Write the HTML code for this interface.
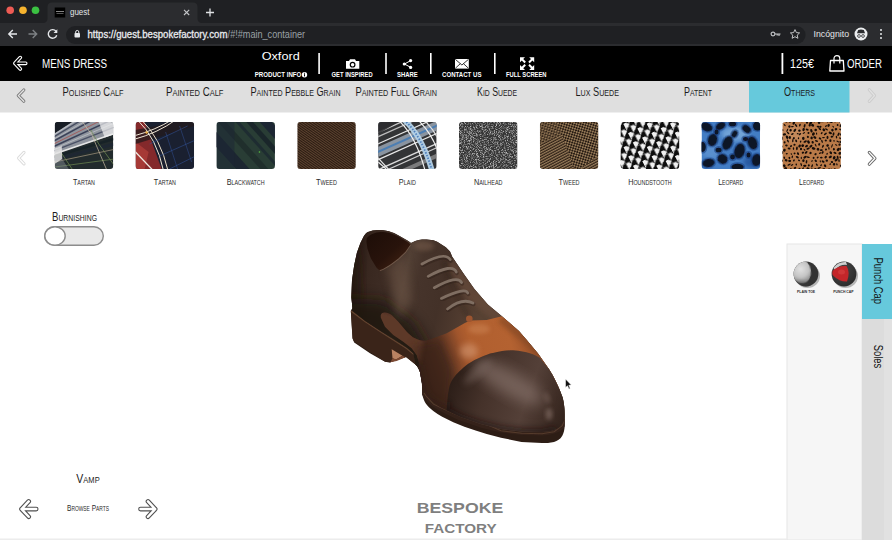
<!DOCTYPE html>
<html><head><meta charset="utf-8"><title>guest</title>
<style>
*{margin:0;padding:0}
html,body{width:892px;height:540px;overflow:hidden;background:#fff}
svg{display:block;font-family:"Liberation Sans", sans-serif}
text{white-space:pre}
</style></head><body>
<svg width="892" height="540" viewBox="0 0 892 540">
<!-- browser chrome -->
<rect x="0" y="0" width="892" height="23" fill="#1f2023"/>
<path d="M43 23 Q47 23 47.5 19 V7 Q47.5 2.5 52 2.5 H193 Q197.500 2.500 197.500 7 V19 Q198 23 202 23 Z" fill="#2b2c2f"/>
<rect x="0" y="23" width="892" height="23" fill="#2b2c2f"/>
<circle cx="10.2" cy="10.2" r="3.800" fill="#ee5b54"/>
<circle cx="23" cy="10.2" r="3.800" fill="#f6b32e"/>
<circle cx="35.5" cy="10.2" r="3.800" fill="#3bc142"/>
<rect x="54.700" y="7.500" width="10.500" height="10" fill="#000"/>
<rect x="56" y="11" width="8" height="0.6" fill="#ddd"/><rect x="56.500" y="13" width="7" height="0.500" fill="#aaa"/>
<text x="70" y="15.3" font-size="9.5" fill="#e4e6e9" font-weight="normal" text-anchor="start" textLength="19.5" lengthAdjust="spacingAndGlyphs" >guest</text>
<path d="M184 9.800 L189.200 15 M189.200 9.800 L184 15" stroke="#c4c6c9" stroke-width="1.100" fill="none"/>
<path d="M210 8.500 V16.500 M206 12.500 H214" stroke="#dfe1e4" stroke-width="1.300" fill="none"/>
<path d="M17 34 H9 M12.800 30 L8.800 34 L12.800 38" stroke="#e6e8eb" stroke-width="1.400" fill="none"/>
<path d="M28.500 34 H36.500 M32.700 30 L36.700 34 L32.700 38" stroke="#7d8084" stroke-width="1.400" fill="none"/>
<path d="M56 31.300 A4.300 4.300 0 1 0 56.700 35.200" stroke="#e6e8eb" stroke-width="1.400" fill="none"/><path d="M57.300 29.200 V33 H53.500 Z" fill="#e6e8eb"/>
<rect x="66" y="26" width="739.600" height="18" rx="9" fill="#1f2023"/>
<rect x="74.500" y="33" width="5.500" height="4.600" rx="0.800" fill="#e6e8eb"/><path d="M75.700 33 V32 A1.550 1.550 0 0 1 78.800 32 V33" stroke="#e6e8eb" stroke-width="1" fill="none"/>
<text x="87.400" y="37.500" font-size="10" fill="#e8eaed" textLength="140" lengthAdjust="spacingAndGlyphs" stroke="#e8eaed" stroke-width="0.300">https://guest.bespokefactory.com</text>
<text x="227.600" y="37.500" font-size="10" fill="#9aa0a6" textLength="77.500" lengthAdjust="spacingAndGlyphs">/#!#main_container</text>
<circle cx="773" cy="34" r="1.900" stroke="#bfc1c4" stroke-width="1.200" fill="none"/><path d="M775 34 H780.500 M779 34 V36 M777.200 34 V35.500" stroke="#bfc1c4" stroke-width="1.200" fill="none"/>
<path d="M795 29.600 L796.400 32.600 L799.600 32.900 L797.200 35.100 L797.900 38.300 L795 36.700 L792.100 38.300 L792.800 35.100 L790.400 32.900 L793.600 32.600 Z" stroke="#cfd1d4" stroke-width="0.900" fill="none" stroke-linejoin="round"/>
<text x="813.5" y="37.3" font-size="9.5" fill="#e4e6e9" font-weight="normal" text-anchor="start" textLength="35.5" lengthAdjust="spacingAndGlyphs" >Incógnito</text>
<circle cx="861" cy="34" r="6.500" fill="#eceef0"/>
<path d="M857 33.200 H865 L863.800 30 Q861 29.200 858.200 30 Z" fill="#2b2c2f"/><circle cx="859" cy="36" r="1.400" stroke="#2b2c2f" stroke-width="0.800" fill="none"/><circle cx="863" cy="36" r="1.400" stroke="#2b2c2f" stroke-width="0.800" fill="none"/>
<circle cx="881" cy="30" r="1" fill="#e6e8eb"/><circle cx="881" cy="34" r="1" fill="#e6e8eb"/><circle cx="881" cy="38" r="1" fill="#e6e8eb"/>
<!-- app header -->
<rect x="0" y="46" width="892" height="35" fill="#000"/>
<path d="M20.3 57.599999999999994 L14.9 63.3 L20.3 69.0 M14.9 63.3 L25.700000000000003 63.3" stroke="#fff" stroke-width="3.7" fill="none" stroke-linejoin="round" stroke-linecap="round"/><path d="M20.3 57.599999999999994 L14.9 63.3 L20.3 69.0 M14.9 63.3 L25.700000000000003 63.3" stroke="#000" stroke-width="1.5" fill="none" stroke-linejoin="round" stroke-linecap="round"/>
<text x="42" y="68.2" font-size="12.5" fill="#fff" font-weight="normal" text-anchor="start" textLength="65" lengthAdjust="spacingAndGlyphs" >MENS DRESS</text>
<text x="280.7" y="59.8" font-size="11" fill="#fff" font-weight="normal" text-anchor="middle" textLength="38" lengthAdjust="spacingAndGlyphs" >Oxford</text>
<text x="254.8" y="77.1" font-size="6.5" fill="#fff" font-weight="bold" text-anchor="start" textLength="46.5" lengthAdjust="spacingAndGlyphs" >PRODUCT INFO</text>
<circle cx="304.500" cy="74.700" r="2.700" fill="#fff"/><rect x="304" y="74.200" width="1" height="2.200" fill="#000"/><rect x="304" y="72.800" width="1" height="0.900" fill="#000"/>
<rect x="318.3" y="53" width="1.600" height="21" fill="#fff"/>
<rect x="385.2" y="53" width="1.600" height="21" fill="#fff"/>
<rect x="430" y="53" width="1.600" height="21" fill="#fff"/>
<rect x="494" y="53" width="1.600" height="21" fill="#fff"/>
<rect x="781.500" y="53" width="1.800" height="21" fill="#fff"/>
<path d="M346 61 H349 L350 59.300 H355 L356 61 H359.300 V68.700 H346 Z" fill="#fff"/><circle cx="352.600" cy="64.700" r="2.900" fill="#000"/><circle cx="352.600" cy="64.700" r="1.700" fill="#fff"/>
<text x="331.6" y="77.1" font-size="6.5" fill="#fff" font-weight="bold" text-anchor="start" textLength="41" lengthAdjust="spacingAndGlyphs" >GET INSPIRED</text>
<path d="M410.500 60.700 L404.500 64 L410.500 67.300" stroke="#fff" stroke-width="1" fill="none"/><circle cx="410.600" cy="60.600" r="1.600" fill="#fff"/><circle cx="404.300" cy="64" r="1.600" fill="#fff"/><circle cx="410.600" cy="67.400" r="1.600" fill="#fff"/>
<text x="397" y="77.1" font-size="6.5" fill="#fff" font-weight="bold" text-anchor="start" textLength="20.7" lengthAdjust="spacingAndGlyphs" >SHARE</text>
<rect x="455" y="59" width="13.800" height="9.600" fill="#fff"/><path d="M455.300 59.300 L461.900 65 L468.500 59.300 M455.300 68.300 L460.300 63.700 M468.500 68.300 L463.500 63.700" stroke="#000" stroke-width="0.800" fill="none"/>
<text x="442" y="77.1" font-size="6.5" fill="#fff" font-weight="bold" text-anchor="start" textLength="39.5" lengthAdjust="spacingAndGlyphs" >CONTACT US</text>
<path d="M520 57.3 h5 l-5 5 Z" fill="#fff"/><path d="M521.5 58.8 L525.2 62.5" stroke="#fff" stroke-width="2"/><path d="M534.2 57.3 h-5 l5 5 Z" fill="#fff"/><path d="M532.7 58.8 L529.0 62.5" stroke="#fff" stroke-width="2"/><path d="M520 70 h5 l-5 -5 Z" fill="#fff"/><path d="M521.5 68.5 L525.2 64.8" stroke="#fff" stroke-width="2"/><path d="M534.2 70 h-5 l5 -5 Z" fill="#fff"/><path d="M532.7 68.5 L529.0 64.8" stroke="#fff" stroke-width="2"/>
<text x="506" y="77.1" font-size="6.5" fill="#fff" font-weight="bold" text-anchor="start" textLength="40.5" lengthAdjust="spacingAndGlyphs" >FULL SCREEN</text>
<text x="790" y="68" font-size="12.5" fill="#fff" font-weight="normal" text-anchor="start" textLength="24" lengthAdjust="spacingAndGlyphs" >125€</text>
<path d="M830.500 60.500 H843.300 L844 71 H829.800 Z" stroke="#fff" stroke-width="1.300" fill="none" stroke-linejoin="round"/><path d="M834 63.500 V58.500 A2.900 2.900 0 0 1 839.800 58.500 V63.500" stroke="#fff" stroke-width="1.200" fill="none"/>
<text x="847" y="68" font-size="12.5" fill="#fff" font-weight="normal" text-anchor="start" textLength="35" lengthAdjust="spacingAndGlyphs" >ORDER</text>
<!-- category bar -->
<rect x="0" y="81" width="892" height="31.500" fill="#dfdfdf"/>
<rect x="749" y="81" width="100.500" height="31.500" fill="#66c9dc"/>
<text x="93" y="96.3" font-size="12" fill="#1c1c1c" font-weight="normal" text-anchor="middle" textLength="61" lengthAdjust="spacingAndGlyphs" >P<tspan font-size="9.3">OLISHED</tspan> C<tspan font-size="9.3">ALF</tspan></text>
<text x="194.7" y="96.3" font-size="12" fill="#1c1c1c" font-weight="normal" text-anchor="middle" textLength="57.5" lengthAdjust="spacingAndGlyphs" >P<tspan font-size="9.3">AINTED</tspan> C<tspan font-size="9.3">ALF</tspan></text>
<text x="295.5" y="96.3" font-size="12" fill="#1c1c1c" font-weight="normal" text-anchor="middle" textLength="90" lengthAdjust="spacingAndGlyphs" >P<tspan font-size="9.3">AINTED</tspan> P<tspan font-size="9.3">EBBLE</tspan> G<tspan font-size="9.3">RAIN</tspan></text>
<text x="396.2" y="96.3" font-size="12" fill="#1c1c1c" font-weight="normal" text-anchor="middle" textLength="81.5" lengthAdjust="spacingAndGlyphs" >P<tspan font-size="9.3">AINTED</tspan> F<tspan font-size="9.3">ULL</tspan> G<tspan font-size="9.3">RAIN</tspan></text>
<text x="497" y="96.3" font-size="12" fill="#1c1c1c" font-weight="normal" text-anchor="middle" textLength="40" lengthAdjust="spacingAndGlyphs" >K<tspan font-size="9.3">ID</tspan> S<tspan font-size="9.3">UEDE</tspan></text>
<text x="597.2" y="96.3" font-size="12" fill="#1c1c1c" font-weight="normal" text-anchor="middle" textLength="43.5" lengthAdjust="spacingAndGlyphs" >L<tspan font-size="9.3">UX</tspan> S<tspan font-size="9.3">UEDE</tspan></text>
<text x="698" y="96.3" font-size="12" fill="#1c1c1c" font-weight="normal" text-anchor="middle" textLength="28" lengthAdjust="spacingAndGlyphs" >P<tspan font-size="9.3">ATENT</tspan></text>
<text x="799.5" y="96.3" font-size="12" fill="#1c1c1c" font-weight="normal" text-anchor="middle" textLength="31" lengthAdjust="spacingAndGlyphs" >O<tspan font-size="9.3">THERS</tspan></text>
<path d="M23.8 90.0 L18.3 95.6 L23.8 101.19999999999999" stroke="#7d7d7d" stroke-width="3.2" fill="none" stroke-linejoin="round" stroke-linecap="round"/><path d="M23.8 90.0 L18.3 95.6 L23.8 101.19999999999999" stroke="#e4e4e4" stroke-width="1.3" fill="none" stroke-linejoin="round" stroke-linecap="round"/>
<path d="M869.3 89.8 L874.5 95.6 L869.3 101.39999999999999" stroke="#cdcdcd" stroke-width="3.2" fill="none" stroke-linejoin="round" stroke-linecap="round"/><path d="M869.3 89.8 L874.5 95.6 L869.3 101.39999999999999" stroke="#e2e2e2" stroke-width="1.3" fill="none" stroke-linejoin="round" stroke-linecap="round"/>
<!-- swatches -->
<defs><clipPath id="cSw"><rect x="0" y="0" width="58.500" height="47" rx="3.200"/></clipPath>
<pattern id="pTweed" width="2" height="2" patternUnits="userSpaceOnUse" patternTransform="rotate(35)"><rect width="2" height="2" fill="#24170f"/><rect width="2" height="0.900" fill="#70523a"/></pattern>
<pattern id="pHound" width="7.200" height="7.200" patternUnits="userSpaceOnUse" patternTransform="rotate(-27) scale(1.450) translate(1 2)"><rect width="7.200" height="7.200" fill="#0a0a0a"/><path d="M0 0 H3.600 V3.600 H0 Z M3.600 3.600 H7.200 V7.200 H3.600 Z" fill="#f0f0f0"/><path d="M0 3.600 H1.600 L0 5.200 Z M3.600 7.200 H5.200 L3.600 8.800 Z M3.600 0 H5.200 L3.600 1.600 Z" fill="#f0f0f0"/><path d="M3.600 0 V1.600 L2 0 Z M7.200 3.600 V5.200 L5.600 3.600 Z M0 3.600 V5.200 L-1.600 3.600 Z M3.600 3.600 L2 3.600 L3.600 2 Z M7.200 7.200 L5.600 7.200 L7.200 5.600 Z" fill="#0a0a0a"/></pattern>
<pattern id="pGlenA" width="2.400" height="2.400" patternUnits="userSpaceOnUse" patternTransform="rotate(-28)"><rect width="2.400" height="2.400" fill="#2a1d13"/><rect width="2.400" height="1.200" fill="#a08460"/></pattern>
<pattern id="pGlenB" width="3.600" height="3.600" patternUnits="userSpaceOnUse" patternTransform="rotate(-28)"><rect width="3.600" height="3.600" fill="#9c805c"/><rect width="1.800" height="1.800" fill="#21170f"/><rect x="1.800" y="1.800" width="1.800" height="1.800" fill="#21170f"/></pattern>
<filter id="fNoise" x="0" y="0" width="100%" height="100%"><feTurbulence type="fractalNoise" baseFrequency="0.900" numOctaves="2" seed="3" result="n"/><feColorMatrix in="n" type="matrix" values="0 0 0 0 0.280  0 0 0 0 0.280  0 0 0 0 0.280  2.600 0 0 0 -0.950"/><feComposite operator="in" in2="SourceGraphic"/></filter>
<filter id="fNoiseL" x="0" y="0" width="100%" height="100%"><feTurbulence type="fractalNoise" baseFrequency="1.300" numOctaves="1" seed="8" result="n"/><feColorMatrix in="n" type="matrix" values="0 0 0 0 0.660  0 0 0 0 0.660  0 0 0 0 0.660  3.200 0 0 0 -1.400"/><feComposite operator="in" in2="SourceGraphic"/></filter>
<filter id="b1" x="-20%" y="-20%" width="140%" height="140%"><feGaussianBlur stdDeviation="0.600"/></filter>
</defs>
<g transform="translate(54.75 122)" clip-path="url(#cSw)"><rect width="58.5" height="47" fill="#222b2d"/><path d="M0 11 L17 0 H58.500 V12.600 L0 32 Z" fill="#8f949d"/><path d="M-1 12.89 L59 -25.59" stroke="#b9bcc3" stroke-width="1.2" opacity="1" fill="none"/><path d="M-1 14.96 L59 -21.57" stroke="#454c60" stroke-width="1.4" opacity="1" fill="none"/><path d="M-1 17.23 L59 -17.15" stroke="#b4b8bf" stroke-width="1.0" opacity="1" fill="none"/><path d="M-1 19.09 L59 -13.53" stroke="#3a4158" stroke-width="1.5" opacity="1" fill="none"/><path d="M-1 21.99 L59 -7.90" stroke="#a8504e" stroke-width="0.8" opacity="1" fill="none"/><path d="M-1 24.47 L59 -3.08" stroke="#3a4158" stroke-width="1.5" opacity="1" fill="none"/><path d="M-1 26.75 L59 1.35" stroke="#b4b8bf" stroke-width="1.0" opacity="1" fill="none"/><path d="M-1 28.81 L59 5.37" stroke="#4a5166" stroke-width="1.4" opacity="1" fill="none"/><path d="M-1 32.12 L59 11.80" stroke="#e4e4e4" stroke-width="1.6" opacity="1" fill="none"/><path d="M-1 34.81 L59 17.02" stroke="#152026" stroke-width="2.5" opacity="0.8" fill="none"/><path d="M-1 40.19 L59 27.48" stroke="#a89a80" stroke-width="0.7" opacity="1" fill="none"/><path d="M-1 45.15 L59 37.12" stroke="#6f8a52" stroke-width="0.7" opacity="1" fill="none"/><path d="M-1 37.50 L59 22.25" stroke="#1a2438" stroke-width="3" opacity="0.5" fill="none"/><path d="M27 -1 L37 12.600 L52 48" stroke="#d0c0a8" stroke-width="0.800" fill="none" opacity="0.850"/><path d="M36 8 L44 22 L60 44" stroke="#6f8a52" stroke-width="0.800" fill="none" opacity="0.900"/><path d="M6 30 L18 48" stroke="#6f8a52" stroke-width="0.800" fill="none" opacity="0.900"/><path d="M44 0 H58.500 V12.600 L50 15.500 Z" fill="#f2f2f2" opacity="0.700"/><path d="M0 26.500 L7 24 L7.500 37 L0 42 Z" fill="#e4e4e4" opacity="0.850"/><path d="M0 0 H17 L0 11 Z" fill="#171c24"/><path d="M0 42 L7.500 37 L14 47 H0 Z" fill="#8a9098" opacity="0.450"/></g>
<g transform="translate(135.60 122)" clip-path="url(#cSw)"><rect width="58.5" height="47" fill="#1a2030"/><path d="M0 0 H9 L26 47 H0 Z" fill="#84292b"/><path d="M0 20 L13 30 L9 47 H0 Z" fill="#b5403c" opacity="0.700"/><path d="M0 8 L40 0 H58.500 V4 L0 22 Z" fill="#231a1c" opacity="0.750"/><path d="M-2 14 Q20 8 36 -2" stroke="#efe6d6" stroke-width="1" fill="none"/><path d="M-2 17.500 Q22 11 40 -2" stroke="#efe6d6" stroke-width="1" fill="none"/><path d="M2 -2 Q21 16 28 49" stroke="#efe6d6" stroke-width="1" fill="none"/><path d="M6 -2 Q25 16 32.500 49" stroke="#e9dcc6" stroke-width="1" fill="none"/><path d="M-2 28 L18 49" stroke="#f0e8e0" stroke-width="1.300" fill="none"/><circle cx="11" cy="10.500" r="1.200" fill="#f0b040"/><path d="M14 22 L52 4 M24 34 L60 18 M34 47 L60 34" stroke="#3456a0" stroke-width="0.700" fill="none" opacity="0.750"/><path d="M30 10 L42 47 M44 4 L56 40" stroke="#3456a0" stroke-width="0.700" fill="none" opacity="0.650"/></g>
<g transform="translate(216.45 122)" clip-path="url(#cSw)"><rect width="58.5" height="47" fill="#293d35"/><g transform="rotate(48 29 23)"><rect x="-30" y="-12" width="120" height="9" fill="#1b2433" opacity="0.9"/><rect x="-30" y="2" width="120" height="5" fill="#172128" opacity="0.8"/><rect x="-30" y="12" width="120" height="3" fill="#1a2530" opacity="0.7"/><rect x="-30" y="22" width="120" height="6" fill="#1d2a2a" opacity="0.7"/><rect x="-30" y="36" width="120" height="10" fill="#1a2230" opacity="0.85"/></g><rect width="18" height="47" fill="#1c2536" opacity="0.500"/><circle cx="43" cy="30" r="0.800" fill="#58c040"/></g>
<g transform="translate(297.30 122)" clip-path="url(#cSw)"><rect width="58.5" height="47" fill="url(#pTweed)"/><rect width="58.5" height="47" fill="#3a281a" opacity="0.250"/></g>
<g transform="translate(378.15 122)" clip-path="url(#cSw)"><rect width="58.5" height="47" fill="#333436"/><g transform="rotate(-24 29 23)"><rect x="-20" y="13" width="100" height="9" fill="#8a94a0"/><rect x="-20" y="16.500" width="100" height="2" fill="#3c78b8" opacity="0.800"/><rect x="-20" y="9.500" width="100" height="1.200" fill="#e8e8e8"/><rect x="-20" y="24" width="100" height="1.200" fill="#e8e8e8"/><rect x="-20" y="33" width="100" height="1.500" fill="#dcdcdc"/><rect x="-20" y="37" width="100" height="1.200" fill="#cfcfcf"/><rect x="-20" y="43" width="100" height="4" fill="#9a9a9a" opacity="0.700"/><rect x="-20" y="-1" width="100" height="1.300" fill="#c8c8c8"/><rect x="-20" y="3" width="100" height="1.200" fill="#bdbdbd"/></g><path d="M26 -2 Q44 14 54 49" stroke="#b4d2e8" stroke-width="5.500" fill="none" opacity="0.950"/><path d="M26 -2 Q44 14 54 49" stroke="#2f66b0" stroke-width="1.800" fill="none" opacity="0.750" stroke-dasharray="1.500 1.500"/><path d="M20 -2 Q38 14 47 49" stroke="#f0f0f0" stroke-width="1.200" fill="none"/><path d="M40 -2 Q54 12 60 30" stroke="#f0f0f0" stroke-width="1.200" fill="none"/><path d="M46 -2 Q58 10 62 22" stroke="#e0e0e0" stroke-width="1.200" fill="none"/><path d="M0 40 L8 47 M-2 34 L12 49" stroke="#e8e8e8" stroke-width="1.200" fill="none"/><path d="M0 0 H20 L0 12 Z" fill="#2c2c2e" opacity="0.850"/></g>
<g transform="translate(459.00 122)" clip-path="url(#cSw)"><rect width="58.5" height="47" fill="#353535"/><rect width="58.5" height="47" fill="#fff" filter="url(#fNoiseL)" opacity="0.850"/></g>
<g transform="translate(539.85 122)" clip-path="url(#cSw)"><rect width="58.5" height="47" fill="url(#pGlenA)"/><path d="M18 0 H58.500 V34 L40 47 H34 Z" fill="url(#pGlenB)"/><path d="M0 0 H18 L24 12 L0 22 Z" fill="url(#pGlenB)" opacity="0.600"/><rect width="58.5" height="47" fill="#5a452e" opacity="0.120"/></g>
<g transform="translate(620.70 122)" clip-path="url(#cSw)"><rect x="-2" y="-2" width="62.5" height="51" fill="url(#pHound)" filter="url(#b05)"/></g>
<g transform="translate(701.55 122)" clip-path="url(#cSw)"><rect width="58.5" height="47" fill="#437dc4"/><ellipse cx="34" cy="12" rx="14" ry="7" fill="#86b4e0" opacity="0.700" filter="url(#b2)"/><ellipse cx="10" cy="30" rx="9" ry="7" fill="#6a9cd6" opacity="0.600" filter="url(#b2)"/><ellipse cx="50" cy="40" rx="8" ry="6" fill="#1f4a90" opacity="0.700" filter="url(#b2)"/><ellipse cx="5" cy="5" rx="7.6" ry="5.6" transform="rotate(25 5 5)" fill="#173a7a" opacity="0.550" filter="url(#b1)"/><ellipse cx="19" cy="4" rx="6.6" ry="4.800000000000001" transform="rotate(-30 19 4)" fill="#173a7a" opacity="0.550" filter="url(#b1)"/><ellipse cx="11" cy="18" rx="6.1" ry="7.6" transform="rotate(15 11 18)" fill="#173a7a" opacity="0.550" filter="url(#b1)"/><ellipse cx="26" cy="21" rx="6.1" ry="8.6" transform="rotate(25 26 21)" fill="#173a7a" opacity="0.550" filter="url(#b1)"/><ellipse cx="7" cy="41" rx="7.6" ry="5.6" transform="rotate(-10 7 41)" fill="#173a7a" opacity="0.550" filter="url(#b1)"/><ellipse cx="21" cy="37" rx="6.6" ry="6.1" transform="rotate(35 21 37)" fill="#173a7a" opacity="0.550" filter="url(#b1)"/><ellipse cx="38" cy="29" rx="6.6" ry="9.1" transform="rotate(15 38 29)" fill="#173a7a" opacity="0.550" filter="url(#b1)"/><ellipse cx="51" cy="21" rx="6.1" ry="8.1" transform="rotate(-20 51 21)" fill="#173a7a" opacity="0.550" filter="url(#b1)"/><ellipse cx="45" cy="7" rx="6.1" ry="4.800000000000001" transform="rotate(40 45 7)" fill="#173a7a" opacity="0.550" filter="url(#b1)"/><ellipse cx="56" cy="4" rx="6.1" ry="6.1" transform="rotate(0 56 4)" fill="#173a7a" opacity="0.550" filter="url(#b1)"/><ellipse cx="36" cy="45" rx="7.6" ry="4.800000000000001" transform="rotate(0 36 45)" fill="#173a7a" opacity="0.550" filter="url(#b1)"/><ellipse cx="55" cy="38" rx="6.1" ry="7.6" transform="rotate(10 55 38)" fill="#173a7a" opacity="0.550" filter="url(#b1)"/><ellipse cx="1" cy="25" rx="4.800000000000001" ry="6.6" transform="rotate(0 1 25)" fill="#173a7a" opacity="0.550" filter="url(#b1)"/><ellipse cx="17" cy="28" rx="4.6" ry="3.9" transform="rotate(0 17 28)" fill="#173a7a" opacity="0.550" filter="url(#b1)"/><ellipse cx="44" cy="17" rx="4.2" ry="3.6" transform="rotate(0 44 17)" fill="#173a7a" opacity="0.550" filter="url(#b1)"/><ellipse cx="31" cy="35" rx="4.0" ry="4.0" transform="rotate(0 31 35)" fill="#173a7a" opacity="0.550" filter="url(#b1)"/><ellipse cx="31" cy="2" rx="5.1" ry="3.9" transform="rotate(0 31 2)" fill="#173a7a" opacity="0.550" filter="url(#b1)"/><ellipse cx="33" cy="12" rx="4.1" ry="5.1" transform="rotate(30 33 12)" fill="#173a7a" opacity="0.550" filter="url(#b1)"/><ellipse cx="15" cy="10" rx="3.6" ry="4.1" transform="rotate(0 15 10)" fill="#173a7a" opacity="0.550" filter="url(#b1)"/><ellipse cx="47" cy="33" rx="3.6" ry="4.1" transform="rotate(0 47 33)" fill="#173a7a" opacity="0.550" filter="url(#b1)"/><ellipse cx="5" cy="5" rx="6" ry="4" transform="rotate(25 5 5)" fill="#0a1226" filter="url(#b1)"/><ellipse cx="19" cy="4" rx="5" ry="3.2" transform="rotate(-30 19 4)" fill="#0a1226" filter="url(#b1)"/><ellipse cx="11" cy="18" rx="4.5" ry="6" transform="rotate(15 11 18)" fill="#0a1226" filter="url(#b1)"/><ellipse cx="26" cy="21" rx="4.5" ry="7" transform="rotate(25 26 21)" fill="#0a1226" filter="url(#b1)"/><ellipse cx="7" cy="41" rx="6" ry="4" transform="rotate(-10 7 41)" fill="#0a1226" filter="url(#b1)"/><ellipse cx="21" cy="37" rx="5" ry="4.5" transform="rotate(35 21 37)" fill="#0a1226" filter="url(#b1)"/><ellipse cx="38" cy="29" rx="5" ry="7.5" transform="rotate(15 38 29)" fill="#0a1226" filter="url(#b1)"/><ellipse cx="51" cy="21" rx="4.5" ry="6.5" transform="rotate(-20 51 21)" fill="#0a1226" filter="url(#b1)"/><ellipse cx="45" cy="7" rx="4.5" ry="3.2" transform="rotate(40 45 7)" fill="#0a1226" filter="url(#b1)"/><ellipse cx="56" cy="4" rx="4.5" ry="4.5" transform="rotate(0 56 4)" fill="#0a1226" filter="url(#b1)"/><ellipse cx="36" cy="45" rx="6" ry="3.2" transform="rotate(0 36 45)" fill="#0a1226" filter="url(#b1)"/><ellipse cx="55" cy="38" rx="4.5" ry="6" transform="rotate(10 55 38)" fill="#0a1226" filter="url(#b1)"/><ellipse cx="1" cy="25" rx="3.2" ry="5" transform="rotate(0 1 25)" fill="#0a1226" filter="url(#b1)"/><ellipse cx="17" cy="28" rx="3" ry="2.3" transform="rotate(0 17 28)" fill="#0a1226" filter="url(#b1)"/><ellipse cx="44" cy="17" rx="2.6" ry="2" transform="rotate(0 44 17)" fill="#0a1226" filter="url(#b1)"/><ellipse cx="31" cy="35" rx="2.4" ry="2.4" transform="rotate(0 31 35)" fill="#0a1226" filter="url(#b1)"/><ellipse cx="31" cy="2" rx="3.5" ry="2.3" transform="rotate(0 31 2)" fill="#0a1226" filter="url(#b1)"/><ellipse cx="33" cy="12" rx="2.5" ry="3.5" transform="rotate(30 33 12)" fill="#0a1226" filter="url(#b1)"/><ellipse cx="15" cy="10" rx="2" ry="2.5" transform="rotate(0 15 10)" fill="#0a1226" filter="url(#b1)"/><ellipse cx="47" cy="33" rx="2" ry="2.5" transform="rotate(0 47 33)" fill="#0a1226" filter="url(#b1)"/></g>
<g transform="translate(782.40 122)" clip-path="url(#cSw)"><rect width="58.5" height="47" fill="#b97a48"/><ellipse cx="10" cy="12" rx="12" ry="9" fill="#c99064" opacity="0.700" filter="url(#b2)"/><ellipse cx="-0.1" cy="0.1" rx="1.8" ry="0.9" transform="rotate(91 -0.1 0.1)" fill="#140c08"/><ellipse cx="4.3" cy="-0.6" rx="1.4" ry="1.0" transform="rotate(143 4.3 -0.6)" fill="#140c08"/><ellipse cx="7.4" cy="-0.4" rx="1.0" ry="1.2" transform="rotate(125 7.4 -0.4)" fill="#140c08"/><ellipse cx="11.4" cy="1.0" rx="1.9" ry="1.1" transform="rotate(111 11.4 1.0)" fill="#140c08"/><ellipse cx="15.7" cy="-1.0" rx="1.4" ry="0.6" transform="rotate(34 15.7 -1.0)" fill="#140c08"/><ellipse cx="20.0" cy="-0.9" rx="1.4" ry="0.9" transform="rotate(152 20.0 -0.9)" fill="#140c08"/><ellipse cx="24.6" cy="0.3" rx="1.4" ry="1.1" transform="rotate(82 24.6 0.3)" fill="#140c08"/><ellipse cx="28.3" cy="1.0" rx="1.9" ry="1.2" transform="rotate(127 28.3 1.0)" fill="#140c08"/><ellipse cx="32.4" cy="-0.5" rx="1.2" ry="0.6" transform="rotate(138 32.4 -0.5)" fill="#140c08"/><ellipse cx="36.7" cy="0.7" rx="1.3" ry="1.3" transform="rotate(153 36.7 0.7)" fill="#140c08"/><ellipse cx="40.0" cy="-0.6" rx="1.8" ry="0.9" transform="rotate(176 40.0 -0.6)" fill="#140c08"/><ellipse cx="44.9" cy="-0.9" rx="1.5" ry="1.1" transform="rotate(49 44.9 -0.9)" fill="#140c08"/><ellipse cx="48.4" cy="-0.3" rx="1.9" ry="1.1" transform="rotate(21 48.4 -0.3)" fill="#140c08"/><ellipse cx="52.8" cy="-0.8" rx="1.0" ry="1.2" transform="rotate(32 52.8 -0.8)" fill="#140c08"/><ellipse cx="57.5" cy="-0.1" rx="1.1" ry="1.1" transform="rotate(24 57.5 -0.1)" fill="#140c08"/><ellipse cx="2.3" cy="3.1" rx="1.3" ry="0.7" transform="rotate(49 2.3 3.1)" fill="#140c08"/><ellipse cx="7.0" cy="4.5" rx="1.2" ry="1.2" transform="rotate(38 7.0 4.5)" fill="#140c08"/><ellipse cx="10.0" cy="4.6" rx="1.5" ry="0.7" transform="rotate(178 10.0 4.6)" fill="#140c08"/><ellipse cx="13.7" cy="3.4" rx="1.7" ry="0.8" transform="rotate(53 13.7 3.4)" fill="#140c08"/><ellipse cx="17.5" cy="3.1" rx="1.5" ry="0.8" transform="rotate(108 17.5 3.1)" fill="#140c08"/><ellipse cx="22.2" cy="3.8" rx="1.9" ry="0.9" transform="rotate(103 22.2 3.8)" fill="#140c08"/><ellipse cx="27.3" cy="3.3" rx="1.1" ry="1.2" transform="rotate(147 27.3 3.3)" fill="#140c08"/><ellipse cx="30.2" cy="3.3" rx="1.6" ry="1.3" transform="rotate(35 30.2 3.3)" fill="#140c08"/><ellipse cx="35.7" cy="4.7" rx="1.5" ry="0.9" transform="rotate(19 35.7 4.7)" fill="#140c08"/><ellipse cx="38.0" cy="4.8" rx="1.1" ry="1.1" transform="rotate(46 38.0 4.8)" fill="#140c08"/><ellipse cx="43.6" cy="4.1" rx="1.2" ry="0.7" transform="rotate(130 43.6 4.1)" fill="#140c08"/><ellipse cx="46.2" cy="3.4" rx="1.5" ry="1.2" transform="rotate(111 46.2 3.4)" fill="#140c08"/><ellipse cx="50.8" cy="4.7" rx="1.1" ry="0.6" transform="rotate(48 50.8 4.7)" fill="#140c08"/><ellipse cx="55.2" cy="3.0" rx="1.1" ry="0.9" transform="rotate(103 55.2 3.0)" fill="#140c08"/><ellipse cx="58.7" cy="3.6" rx="1.8" ry="1.3" transform="rotate(118 58.7 3.6)" fill="#140c08"/><ellipse cx="0.4" cy="8.0" rx="1.0" ry="0.6" transform="rotate(3 0.4 8.0)" fill="#140c08"/><ellipse cx="4.9" cy="8.2" rx="1.9" ry="0.6" transform="rotate(115 4.9 8.2)" fill="#140c08"/><ellipse cx="8.2" cy="8.3" rx="1.2" ry="1.3" transform="rotate(14 8.2 8.3)" fill="#140c08"/><ellipse cx="12.4" cy="8.3" rx="1.8" ry="1.1" transform="rotate(127 12.4 8.3)" fill="#140c08"/><ellipse cx="17.0" cy="8.6" rx="1.3" ry="1.1" transform="rotate(162 17.0 8.6)" fill="#140c08"/><ellipse cx="21.2" cy="7.6" rx="1.7" ry="1.2" transform="rotate(103 21.2 7.6)" fill="#140c08"/><ellipse cx="24.8" cy="7.6" rx="1.5" ry="1.0" transform="rotate(14 24.8 7.6)" fill="#140c08"/><ellipse cx="29.0" cy="8.8" rx="1.8" ry="1.1" transform="rotate(70 29.0 8.8)" fill="#140c08"/><ellipse cx="33.3" cy="8.0" rx="1.3" ry="1.2" transform="rotate(15 33.3 8.0)" fill="#140c08"/><ellipse cx="37.4" cy="6.9" rx="1.5" ry="0.9" transform="rotate(41 37.4 6.9)" fill="#140c08"/><ellipse cx="41.4" cy="7.8" rx="1.5" ry="1.2" transform="rotate(46 41.4 7.8)" fill="#140c08"/><ellipse cx="44.1" cy="7.4" rx="1.6" ry="0.7" transform="rotate(31 44.1 7.4)" fill="#140c08"/><ellipse cx="50.0" cy="8.1" rx="1.3" ry="1.2" transform="rotate(59 50.0 8.1)" fill="#140c08"/><ellipse cx="53.6" cy="7.2" rx="1.3" ry="1.2" transform="rotate(165 53.6 7.2)" fill="#140c08"/><ellipse cx="58.2" cy="7.6" rx="1.5" ry="0.8" transform="rotate(25 58.2 7.6)" fill="#140c08"/><ellipse cx="2.0" cy="12.4" rx="1.7" ry="1.1" transform="rotate(171 2.0 12.4)" fill="#140c08"/><ellipse cx="5.7" cy="11.0" rx="1.4" ry="0.8" transform="rotate(39 5.7 11.0)" fill="#140c08"/><ellipse cx="10.0" cy="12.0" rx="1.4" ry="0.8" transform="rotate(151 10.0 12.0)" fill="#140c08"/><ellipse cx="15.3" cy="11.6" rx="1.0" ry="0.6" transform="rotate(157 15.3 11.6)" fill="#140c08"/><ellipse cx="17.5" cy="12.1" rx="1.5" ry="0.8" transform="rotate(142 17.5 12.1)" fill="#140c08"/><ellipse cx="21.5" cy="11.0" rx="1.4" ry="0.6" transform="rotate(149 21.5 11.0)" fill="#140c08"/><ellipse cx="26.1" cy="11.0" rx="0.9" ry="1.0" transform="rotate(80 26.1 11.0)" fill="#140c08"/><ellipse cx="31.0" cy="12.0" rx="1.7" ry="1.3" transform="rotate(123 31.0 12.0)" fill="#140c08"/><ellipse cx="34.2" cy="11.7" rx="1.1" ry="0.6" transform="rotate(85 34.2 11.7)" fill="#140c08"/><ellipse cx="39.3" cy="11.1" rx="1.2" ry="0.8" transform="rotate(126 39.3 11.1)" fill="#140c08"/><ellipse cx="43.0" cy="11.9" rx="1.7" ry="0.9" transform="rotate(143 43.0 11.9)" fill="#140c08"/><ellipse cx="47.9" cy="10.9" rx="1.8" ry="1.1" transform="rotate(23 47.9 10.9)" fill="#140c08"/><ellipse cx="51.1" cy="12.0" rx="1.8" ry="0.9" transform="rotate(102 51.1 12.0)" fill="#140c08"/><ellipse cx="56.1" cy="12.3" rx="1.8" ry="0.9" transform="rotate(117 56.1 12.3)" fill="#140c08"/><ellipse cx="58.8" cy="12.1" rx="1.7" ry="1.0" transform="rotate(129 58.8 12.1)" fill="#140c08"/><ellipse cx="-0.6" cy="16.4" rx="1.9" ry="1.3" transform="rotate(97 -0.6 16.4)" fill="#140c08"/><ellipse cx="4.7" cy="15.2" rx="1.8" ry="1.2" transform="rotate(63 4.7 15.2)" fill="#140c08"/><ellipse cx="7.4" cy="15.5" rx="1.5" ry="1.1" transform="rotate(88 7.4 15.5)" fill="#140c08"/><ellipse cx="11.4" cy="16.2" rx="1.0" ry="1.2" transform="rotate(31 11.4 16.2)" fill="#140c08"/><ellipse cx="16.1" cy="16.2" rx="1.0" ry="0.7" transform="rotate(93 16.1 16.2)" fill="#140c08"/><ellipse cx="20.9" cy="16.3" rx="1.6" ry="1.3" transform="rotate(89 20.9 16.3)" fill="#140c08"/><ellipse cx="25.5" cy="14.8" rx="1.1" ry="1.0" transform="rotate(52 25.5 14.8)" fill="#140c08"/><ellipse cx="29.2" cy="15.9" rx="1.4" ry="1.2" transform="rotate(101 29.2 15.9)" fill="#140c08"/><ellipse cx="32.4" cy="15.4" rx="1.7" ry="1.2" transform="rotate(37 32.4 15.4)" fill="#140c08"/><ellipse cx="37.6" cy="16.5" rx="1.4" ry="1.0" transform="rotate(36 37.6 16.5)" fill="#140c08"/><ellipse cx="41.1" cy="15.6" rx="1.5" ry="0.6" transform="rotate(174 41.1 15.6)" fill="#140c08"/><ellipse cx="45.1" cy="15.4" rx="1.7" ry="1.0" transform="rotate(88 45.1 15.4)" fill="#140c08"/><ellipse cx="49.6" cy="14.7" rx="1.4" ry="0.9" transform="rotate(172 49.6 14.7)" fill="#140c08"/><ellipse cx="54.1" cy="15.1" rx="1.4" ry="0.7" transform="rotate(78 54.1 15.1)" fill="#140c08"/><ellipse cx="58.0" cy="16.4" rx="1.4" ry="0.8" transform="rotate(34 58.0 16.4)" fill="#140c08"/><ellipse cx="2.2" cy="20.4" rx="1.0" ry="1.1" transform="rotate(4 2.2 20.4)" fill="#140c08"/><ellipse cx="5.5" cy="19.0" rx="1.6" ry="0.8" transform="rotate(64 5.5 19.0)" fill="#140c08"/><ellipse cx="10.4" cy="18.7" rx="1.6" ry="0.7" transform="rotate(92 10.4 18.7)" fill="#140c08"/><ellipse cx="13.8" cy="18.9" rx="1.4" ry="0.9" transform="rotate(68 13.8 18.9)" fill="#140c08"/><ellipse cx="18.2" cy="19.6" rx="1.1" ry="0.7" transform="rotate(114 18.2 19.6)" fill="#140c08"/><ellipse cx="22.8" cy="19.6" rx="1.8" ry="1.0" transform="rotate(154 22.8 19.6)" fill="#140c08"/><ellipse cx="26.1" cy="20.0" rx="1.7" ry="1.2" transform="rotate(57 26.1 20.0)" fill="#140c08"/><ellipse cx="30.3" cy="20.3" rx="1.1" ry="1.3" transform="rotate(160 30.3 20.3)" fill="#140c08"/><ellipse cx="34.1" cy="19.0" rx="1.6" ry="0.8" transform="rotate(17 34.1 19.0)" fill="#140c08"/><ellipse cx="39.6" cy="19.3" rx="1.7" ry="0.7" transform="rotate(73 39.6 19.3)" fill="#140c08"/><ellipse cx="43.4" cy="18.5" rx="1.1" ry="1.1" transform="rotate(164 43.4 18.5)" fill="#140c08"/><ellipse cx="48.0" cy="18.7" rx="1.4" ry="1.1" transform="rotate(91 48.0 18.7)" fill="#140c08"/><ellipse cx="51.6" cy="18.9" rx="1.0" ry="0.7" transform="rotate(7 51.6 18.9)" fill="#140c08"/><ellipse cx="55.4" cy="19.5" rx="1.5" ry="0.7" transform="rotate(33 55.4 19.5)" fill="#140c08"/><ellipse cx="58.8" cy="20.2" rx="1.9" ry="1.2" transform="rotate(17 58.8 20.2)" fill="#140c08"/><ellipse cx="-0.9" cy="24.3" rx="1.4" ry="1.1" transform="rotate(59 -0.9 24.3)" fill="#140c08"/><ellipse cx="4.0" cy="23.4" rx="1.3" ry="1.0" transform="rotate(2 4.0 23.4)" fill="#140c08"/><ellipse cx="8.6" cy="24.1" rx="1.1" ry="0.9" transform="rotate(133 8.6 24.1)" fill="#140c08"/><ellipse cx="12.1" cy="22.8" rx="1.1" ry="1.0" transform="rotate(3 12.1 22.8)" fill="#140c08"/><ellipse cx="17.2" cy="24.0" rx="1.6" ry="1.2" transform="rotate(113 17.2 24.0)" fill="#140c08"/><ellipse cx="20.3" cy="23.6" rx="1.4" ry="1.3" transform="rotate(145 20.3 23.6)" fill="#140c08"/><ellipse cx="24.1" cy="24.2" rx="1.6" ry="1.1" transform="rotate(147 24.1 24.2)" fill="#140c08"/><ellipse cx="28.5" cy="24.2" rx="1.8" ry="1.1" transform="rotate(138 28.5 24.2)" fill="#140c08"/><ellipse cx="33.3" cy="23.2" rx="1.6" ry="0.6" transform="rotate(62 33.3 23.2)" fill="#140c08"/><ellipse cx="36.8" cy="22.4" rx="1.3" ry="1.0" transform="rotate(112 36.8 22.4)" fill="#140c08"/><ellipse cx="40.5" cy="24.3" rx="1.6" ry="0.8" transform="rotate(119 40.5 24.3)" fill="#140c08"/><ellipse cx="45.2" cy="23.5" rx="1.3" ry="1.3" transform="rotate(116 45.2 23.5)" fill="#140c08"/><ellipse cx="49.6" cy="23.9" rx="1.9" ry="0.6" transform="rotate(111 49.6 23.9)" fill="#140c08"/><ellipse cx="53.8" cy="22.9" rx="1.3" ry="0.6" transform="rotate(35 53.8 22.9)" fill="#140c08"/><ellipse cx="57.2" cy="22.6" rx="1.2" ry="1.2" transform="rotate(99 57.2 22.6)" fill="#140c08"/><ellipse cx="2.0" cy="28.2" rx="1.5" ry="1.3" transform="rotate(115 2.0 28.2)" fill="#140c08"/><ellipse cx="6.7" cy="26.5" rx="1.5" ry="1.1" transform="rotate(8 6.7 26.5)" fill="#140c08"/><ellipse cx="11.1" cy="26.6" rx="1.4" ry="0.7" transform="rotate(89 11.1 26.6)" fill="#140c08"/><ellipse cx="14.5" cy="26.4" rx="1.8" ry="0.9" transform="rotate(95 14.5 26.4)" fill="#140c08"/><ellipse cx="18.6" cy="27.0" rx="1.2" ry="1.1" transform="rotate(101 18.6 27.0)" fill="#140c08"/><ellipse cx="22.1" cy="27.7" rx="1.2" ry="0.6" transform="rotate(44 22.1 27.7)" fill="#140c08"/><ellipse cx="25.7" cy="26.6" rx="1.7" ry="0.9" transform="rotate(162 25.7 26.6)" fill="#140c08"/><ellipse cx="31.2" cy="26.4" rx="1.9" ry="1.3" transform="rotate(13 31.2 26.4)" fill="#140c08"/><ellipse cx="35.6" cy="27.2" rx="1.4" ry="1.3" transform="rotate(44 35.6 27.2)" fill="#140c08"/><ellipse cx="38.9" cy="28.2" rx="1.6" ry="0.9" transform="rotate(176 38.9 28.2)" fill="#140c08"/><ellipse cx="43.6" cy="27.5" rx="1.0" ry="1.0" transform="rotate(82 43.6 27.5)" fill="#140c08"/><ellipse cx="46.5" cy="26.4" rx="1.4" ry="0.7" transform="rotate(80 46.5 26.4)" fill="#140c08"/><ellipse cx="51.5" cy="27.2" rx="1.2" ry="1.0" transform="rotate(76 51.5 27.2)" fill="#140c08"/><ellipse cx="55.9" cy="27.4" rx="1.9" ry="1.3" transform="rotate(132 55.9 27.4)" fill="#140c08"/><ellipse cx="58.9" cy="26.5" rx="1.8" ry="1.1" transform="rotate(112 58.9 26.5)" fill="#140c08"/><ellipse cx="-0.3" cy="30.7" rx="1.6" ry="1.0" transform="rotate(107 -0.3 30.7)" fill="#140c08"/><ellipse cx="4.4" cy="31.7" rx="1.1" ry="0.8" transform="rotate(176 4.4 31.7)" fill="#140c08"/><ellipse cx="9.0" cy="32.0" rx="0.9" ry="0.6" transform="rotate(49 9.0 32.0)" fill="#140c08"/><ellipse cx="12.2" cy="31.4" rx="1.0" ry="1.0" transform="rotate(13 12.2 31.4)" fill="#140c08"/><ellipse cx="15.6" cy="31.6" rx="1.5" ry="1.0" transform="rotate(67 15.6 31.6)" fill="#140c08"/><ellipse cx="20.5" cy="30.6" rx="1.2" ry="1.1" transform="rotate(151 20.5 30.6)" fill="#140c08"/><ellipse cx="23.7" cy="30.4" rx="1.7" ry="1.0" transform="rotate(138 23.7 30.4)" fill="#140c08"/><ellipse cx="28.1" cy="31.0" rx="1.2" ry="1.2" transform="rotate(66 28.1 31.0)" fill="#140c08"/><ellipse cx="33.1" cy="32.2" rx="1.2" ry="1.0" transform="rotate(134 33.1 32.2)" fill="#140c08"/><ellipse cx="37.7" cy="31.1" rx="1.3" ry="0.7" transform="rotate(158 37.7 31.1)" fill="#140c08"/><ellipse cx="40.2" cy="30.4" rx="1.5" ry="0.9" transform="rotate(123 40.2 30.4)" fill="#140c08"/><ellipse cx="44.7" cy="31.8" rx="1.0" ry="0.7" transform="rotate(119 44.7 31.8)" fill="#140c08"/><ellipse cx="48.4" cy="30.8" rx="1.6" ry="1.1" transform="rotate(51 48.4 30.8)" fill="#140c08"/><ellipse cx="52.6" cy="30.9" rx="1.6" ry="0.9" transform="rotate(21 52.6 30.9)" fill="#140c08"/><ellipse cx="57.8" cy="31.3" rx="1.8" ry="1.3" transform="rotate(164 57.8 31.3)" fill="#140c08"/><ellipse cx="1.9" cy="35.7" rx="1.2" ry="0.8" transform="rotate(72 1.9 35.7)" fill="#140c08"/><ellipse cx="7.0" cy="35.9" rx="1.1" ry="0.9" transform="rotate(66 7.0 35.9)" fill="#140c08"/><ellipse cx="9.9" cy="34.9" rx="1.3" ry="0.7" transform="rotate(101 9.9 34.9)" fill="#140c08"/><ellipse cx="14.9" cy="35.2" rx="1.7" ry="1.0" transform="rotate(32 14.9 35.2)" fill="#140c08"/><ellipse cx="18.9" cy="35.9" rx="1.2" ry="0.6" transform="rotate(93 18.9 35.9)" fill="#140c08"/><ellipse cx="22.6" cy="35.2" rx="1.9" ry="1.1" transform="rotate(145 22.6 35.2)" fill="#140c08"/><ellipse cx="25.7" cy="35.2" rx="1.7" ry="0.7" transform="rotate(15 25.7 35.2)" fill="#140c08"/><ellipse cx="31.2" cy="35.9" rx="1.0" ry="1.0" transform="rotate(26 31.2 35.9)" fill="#140c08"/><ellipse cx="35.3" cy="35.4" rx="1.1" ry="0.8" transform="rotate(138 35.3 35.4)" fill="#140c08"/><ellipse cx="38.9" cy="35.6" rx="1.3" ry="0.8" transform="rotate(174 38.9 35.6)" fill="#140c08"/><ellipse cx="43.3" cy="35.1" rx="1.4" ry="1.1" transform="rotate(127 43.3 35.1)" fill="#140c08"/><ellipse cx="47.9" cy="34.9" rx="1.7" ry="1.1" transform="rotate(154 47.9 34.9)" fill="#140c08"/><ellipse cx="51.8" cy="35.8" rx="1.8" ry="1.3" transform="rotate(115 51.8 35.8)" fill="#140c08"/><ellipse cx="55.3" cy="35.5" rx="1.7" ry="0.9" transform="rotate(76 55.3 35.5)" fill="#140c08"/><ellipse cx="58.7" cy="35.6" rx="1.9" ry="0.9" transform="rotate(30 58.7 35.6)" fill="#140c08"/><ellipse cx="-0.6" cy="38.8" rx="1.2" ry="1.3" transform="rotate(11 -0.6 38.8)" fill="#140c08"/><ellipse cx="3.7" cy="38.2" rx="1.5" ry="1.1" transform="rotate(32 3.7 38.2)" fill="#140c08"/><ellipse cx="7.3" cy="38.9" rx="1.5" ry="1.2" transform="rotate(7 7.3 38.9)" fill="#140c08"/><ellipse cx="11.5" cy="38.4" rx="1.1" ry="0.8" transform="rotate(129 11.5 38.4)" fill="#140c08"/><ellipse cx="16.6" cy="38.4" rx="1.1" ry="0.8" transform="rotate(31 16.6 38.4)" fill="#140c08"/><ellipse cx="21.0" cy="38.6" rx="1.4" ry="1.2" transform="rotate(86 21.0 38.6)" fill="#140c08"/><ellipse cx="24.1" cy="39.8" rx="1.8" ry="0.8" transform="rotate(99 24.1 39.8)" fill="#140c08"/><ellipse cx="29.6" cy="39.0" rx="1.1" ry="0.6" transform="rotate(171 29.6 39.0)" fill="#140c08"/><ellipse cx="33.4" cy="38.8" rx="1.4" ry="1.0" transform="rotate(49 33.4 38.8)" fill="#140c08"/><ellipse cx="37.9" cy="39.3" rx="1.1" ry="0.6" transform="rotate(85 37.9 39.3)" fill="#140c08"/><ellipse cx="40.7" cy="39.6" rx="1.6" ry="1.0" transform="rotate(28 40.7 39.6)" fill="#140c08"/><ellipse cx="44.4" cy="38.6" rx="1.2" ry="1.2" transform="rotate(93 44.4 38.6)" fill="#140c08"/><ellipse cx="49.5" cy="40.0" rx="1.2" ry="1.0" transform="rotate(27 49.5 40.0)" fill="#140c08"/><ellipse cx="53.8" cy="38.0" rx="1.7" ry="1.2" transform="rotate(148 53.8 38.0)" fill="#140c08"/><ellipse cx="56.6" cy="38.5" rx="1.6" ry="0.7" transform="rotate(86 56.6 38.5)" fill="#140c08"/><ellipse cx="1.9" cy="43.8" rx="1.5" ry="1.2" transform="rotate(55 1.9 43.8)" fill="#140c08"/><ellipse cx="6.7" cy="42.7" rx="1.8" ry="0.7" transform="rotate(149 6.7 42.7)" fill="#140c08"/><ellipse cx="9.6" cy="43.0" rx="1.4" ry="0.7" transform="rotate(150 9.6 43.0)" fill="#140c08"/><ellipse cx="13.9" cy="42.5" rx="1.0" ry="0.8" transform="rotate(84 13.9 42.5)" fill="#140c08"/><ellipse cx="18.8" cy="42.6" rx="1.6" ry="0.7" transform="rotate(71 18.8 42.6)" fill="#140c08"/><ellipse cx="22.4" cy="43.8" rx="1.7" ry="1.1" transform="rotate(2 22.4 43.8)" fill="#140c08"/><ellipse cx="26.4" cy="43.3" rx="1.1" ry="1.0" transform="rotate(82 26.4 43.3)" fill="#140c08"/><ellipse cx="29.7" cy="43.9" rx="1.7" ry="0.7" transform="rotate(111 29.7 43.9)" fill="#140c08"/><ellipse cx="34.4" cy="42.7" rx="1.4" ry="0.8" transform="rotate(61 34.4 42.7)" fill="#140c08"/><ellipse cx="38.7" cy="43.2" rx="1.2" ry="0.7" transform="rotate(132 38.7 43.2)" fill="#140c08"/><ellipse cx="42.7" cy="43.8" rx="1.5" ry="1.1" transform="rotate(60 42.7 43.8)" fill="#140c08"/><ellipse cx="47.8" cy="42.1" rx="1.0" ry="0.7" transform="rotate(122 47.8 42.1)" fill="#140c08"/><ellipse cx="51.6" cy="42.3" rx="1.3" ry="1.2" transform="rotate(107 51.6 42.3)" fill="#140c08"/><ellipse cx="54.5" cy="42.4" rx="1.1" ry="0.7" transform="rotate(73 54.5 42.4)" fill="#140c08"/><ellipse cx="58.5" cy="43.7" rx="1.3" ry="1.0" transform="rotate(117 58.5 43.7)" fill="#140c08"/><ellipse cx="0.5" cy="47.4" rx="1.3" ry="0.8" transform="rotate(74 0.5 47.4)" fill="#140c08"/><ellipse cx="3.1" cy="46.6" rx="1.6" ry="1.3" transform="rotate(142 3.1 46.6)" fill="#140c08"/><ellipse cx="8.5" cy="47.0" rx="0.9" ry="0.8" transform="rotate(62 8.5 47.0)" fill="#140c08"/><ellipse cx="12.6" cy="46.0" rx="1.3" ry="1.0" transform="rotate(142 12.6 46.0)" fill="#140c08"/><ellipse cx="17.1" cy="47.0" rx="1.1" ry="1.1" transform="rotate(163 17.1 47.0)" fill="#140c08"/><ellipse cx="20.6" cy="46.5" rx="1.4" ry="0.7" transform="rotate(128 20.6 46.5)" fill="#140c08"/><ellipse cx="25.6" cy="46.8" rx="1.6" ry="1.2" transform="rotate(35 25.6 46.8)" fill="#140c08"/><ellipse cx="29.6" cy="47.1" rx="1.1" ry="0.7" transform="rotate(44 29.6 47.1)" fill="#140c08"/><ellipse cx="33.0" cy="47.2" rx="1.2" ry="1.3" transform="rotate(65 33.0 47.2)" fill="#140c08"/><ellipse cx="36.8" cy="46.0" rx="1.9" ry="0.7" transform="rotate(163 36.8 46.0)" fill="#140c08"/><ellipse cx="41.1" cy="46.9" rx="1.5" ry="0.8" transform="rotate(164 41.1 46.9)" fill="#140c08"/><ellipse cx="46.1" cy="47.4" rx="1.5" ry="0.7" transform="rotate(148 46.1 47.4)" fill="#140c08"/><ellipse cx="48.8" cy="47.6" rx="1.1" ry="1.0" transform="rotate(150 48.8 47.6)" fill="#140c08"/><ellipse cx="52.7" cy="46.9" rx="1.0" ry="0.6" transform="rotate(32 52.7 46.9)" fill="#140c08"/><ellipse cx="58.4" cy="47.7" rx="1.6" ry="0.8" transform="rotate(121 58.4 47.7)" fill="#140c08"/></g>
<text x="83.95" y="185.3" font-size="8.5" fill="#2a2a2a" font-weight="normal" text-anchor="middle" textLength="22" lengthAdjust="spacingAndGlyphs" >T<tspan font-size="6.3">ARTAN</tspan></text>
<text x="164.79999999999998" y="185.3" font-size="8.5" fill="#2a2a2a" font-weight="normal" text-anchor="middle" textLength="22" lengthAdjust="spacingAndGlyphs" >T<tspan font-size="6.3">ARTAN</tspan></text>
<text x="245.64999999999998" y="185.3" font-size="8.5" fill="#2a2a2a" font-weight="normal" text-anchor="middle" textLength="38" lengthAdjust="spacingAndGlyphs" >B<tspan font-size="6.3">LACKWATCH</tspan></text>
<text x="326.49999999999994" y="185.3" font-size="8.5" fill="#2a2a2a" font-weight="normal" text-anchor="middle" textLength="21" lengthAdjust="spacingAndGlyphs" >T<tspan font-size="6.3">WEED</tspan></text>
<text x="407.34999999999997" y="185.3" font-size="8.5" fill="#2a2a2a" font-weight="normal" text-anchor="middle" textLength="17" lengthAdjust="spacingAndGlyphs" >P<tspan font-size="6.3">LAID</tspan></text>
<text x="488.2" y="185.3" font-size="8.5" fill="#2a2a2a" font-weight="normal" text-anchor="middle" textLength="28.5" lengthAdjust="spacingAndGlyphs" >N<tspan font-size="6.3">AILHEAD</tspan></text>
<text x="569.05" y="185.3" font-size="8.5" fill="#2a2a2a" font-weight="normal" text-anchor="middle" textLength="21" lengthAdjust="spacingAndGlyphs" >T<tspan font-size="6.3">WEED</tspan></text>
<text x="649.9" y="185.3" font-size="8.5" fill="#2a2a2a" font-weight="normal" text-anchor="middle" textLength="43.5" lengthAdjust="spacingAndGlyphs" >H<tspan font-size="6.3">OUNDSTOOTH</tspan></text>
<text x="730.75" y="185.3" font-size="8.5" fill="#2a2a2a" font-weight="normal" text-anchor="middle" textLength="25" lengthAdjust="spacingAndGlyphs" >L<tspan font-size="6.3">EOPARD</tspan></text>
<text x="811.6" y="185.3" font-size="8.5" fill="#2a2a2a" font-weight="normal" text-anchor="middle" textLength="25" lengthAdjust="spacingAndGlyphs" >L<tspan font-size="6.3">EOPARD</tspan></text>
<path d="M24 152.4 L18.6 158.1 L24 163.79999999999998" stroke="#dcdcdc" stroke-width="3.2" fill="none" stroke-linejoin="round" stroke-linecap="round"/><path d="M24 152.4 L18.6 158.1 L24 163.79999999999998" stroke="#fff" stroke-width="1.3" fill="none" stroke-linejoin="round" stroke-linecap="round"/>
<path d="M869.3 152.4 L874.9 158.3 L869.3 164.20000000000002" stroke="#6a6a6a" stroke-width="3.2" fill="none" stroke-linejoin="round" stroke-linecap="round"/><path d="M869.3 152.4 L874.9 158.3 L869.3 164.20000000000002" stroke="#fff" stroke-width="1.3" fill="none" stroke-linejoin="round" stroke-linecap="round"/>
<!-- left controls -->
<text x="74.5" y="221" font-size="12" fill="#1c1c1c" font-weight="normal" text-anchor="middle" textLength="45" lengthAdjust="spacingAndGlyphs" >B<tspan font-size="8.6">URNISHING</tspan></text>
<rect x="44.700" y="226.700" width="58.600" height="18.600" rx="9.300" fill="#e9e9e9" stroke="#8c8c8c" stroke-width="1.400"/>
<ellipse cx="55" cy="236" rx="10.200" ry="9.300" fill="#fff" stroke="#8c8c8c" stroke-width="1.400"/>
<text x="88" y="483" font-size="12" fill="#1c1c1c" font-weight="normal" text-anchor="middle" textLength="23.3" lengthAdjust="spacingAndGlyphs" >V<tspan font-size="8.6">AMP</tspan></text>
<text x="88" y="511.3" font-size="8.5" fill="#2a2a2a" font-weight="normal" text-anchor="middle" textLength="42" lengthAdjust="spacingAndGlyphs" >B<tspan font-size="6.3">ROWSE</tspan> P<tspan font-size="6.3">ARTS</tspan></text>
<path d="M28.7 501.45000000000005 L21.5 509.1 L28.7 516.75 M21.5 509.1 L36.2 509.1" stroke="#505050" stroke-width="4.7" fill="none" stroke-linejoin="round" stroke-linecap="round"/><path d="M28.7 501.45000000000005 L21.5 509.1 L28.7 516.75 M21.5 509.1 L36.2 509.1" stroke="#fff" stroke-width="2.5" fill="none" stroke-linejoin="round" stroke-linecap="round"/>
<path d="M148.0 501.45000000000005 L155.2 509.1 L148.0 516.75 M155.2 509.1 L140.5 509.1" stroke="#505050" stroke-width="4.7" fill="none" stroke-linejoin="round" stroke-linecap="round"/><path d="M148.0 501.45000000000005 L155.2 509.1 L148.0 516.75 M155.2 509.1 L140.5 509.1" stroke="#fff" stroke-width="2.5" fill="none" stroke-linejoin="round" stroke-linecap="round"/>
<!-- right panel -->
<rect x="787" y="244" width="75" height="296" fill="#f6f6f6"/>
<rect x="787" y="244" width="75" height="296" fill="none" stroke="#e6e6e6" stroke-width="1"/>
<rect x="862" y="244" width="30" height="75" fill="#66c9dc"/>
<rect x="862" y="319" width="30" height="221" fill="#dcdcdc"/>
<rect x="884" y="319" width="8" height="221" fill="#e1e1e1"/>
<text transform="translate(873.500 257.500) rotate(90)" font-size="12" fill="#111" textLength="46.500" lengthAdjust="spacingAndGlyphs">Punch Cap</text>
<text transform="translate(873.500 344.700) rotate(90)" font-size="12" fill="#111" textLength="23.500" lengthAdjust="spacingAndGlyphs">Soles</text>
<defs>
<radialGradient id="ball" cx="801" cy="269" r="16" gradientUnits="userSpaceOnUse"><stop offset="0" stop-color="#e2e2e2"/><stop offset="0.500" stop-color="#c4c4c4"/><stop offset="0.850" stop-color="#8a8a8a"/><stop offset="1" stop-color="#5a5a5a"/></radialGradient>
<radialGradient id="ball2" cx="841" cy="270" r="17" gradientUnits="userSpaceOnUse"><stop offset="0" stop-color="#4a4a4a"/><stop offset="1" stop-color="#2c2c2c"/></radialGradient>
<clipPath id="cB1"><circle cx="806" cy="274" r="12.400"/></clipPath>
<clipPath id="cB2"><circle cx="844" cy="274" r="12.400"/></clipPath>
</defs>
<ellipse cx="807.500" cy="276" rx="12.500" ry="12" fill="#000" opacity="0.250" filter="url(#b1)"/>
<ellipse cx="845.500" cy="276" rx="12.500" ry="12" fill="#000" opacity="0.250" filter="url(#b1)"/>
<circle cx="806" cy="274" r="12.400" fill="#343434"/>
<g clip-path="url(#cB1)"><ellipse cx="801.500" cy="271.500" rx="9.500" ry="12" transform="rotate(-8 801.500 271.500)" fill="url(#ball)" filter="url(#b1)"/><ellipse cx="800" cy="289" rx="12" ry="6" fill="#3a3a3a" opacity="0.800" filter="url(#b2)"/></g>
<circle cx="844" cy="274" r="12.400" fill="url(#ball2)"/>
<g clip-path="url(#cB2)"><path d="M833.500 268 Q838 261.500 846 262 L847 265 Q840 264 835 270 Z" fill="#cfcfcf" filter="url(#b1)"/><path d="M832.500 271 Q838 265.300 846.500 266 Q850.500 272 847 281.500 Q840 282 833.500 276 Q831.500 273.500 832.500 271 Z" fill="#c4262a"/><ellipse cx="841.500" cy="272" rx="3.500" ry="2.500" fill="#dc4a48" opacity="0.500" filter="url(#b1)"/></g>
<text x="806.1" y="292.5" font-size="3.9" fill="#2a2a2a" font-weight="bold" text-anchor="middle" textLength="18" lengthAdjust="spacingAndGlyphs" >PLAIN TOE</text>
<text x="843.4" y="292.5" font-size="3.9" fill="#2a2a2a" font-weight="bold" text-anchor="middle" textLength="20.4" lengthAdjust="spacingAndGlyphs" >PUNCH CAP</text>
<!-- logo -->
<text x="460" y="513.3" font-size="15.3" fill="#7f7f7f" font-weight="bold" text-anchor="middle" textLength="86.5" lengthAdjust="spacingAndGlyphs" >BESPOKE</text>
<text x="460.7" y="533" font-size="12.6" fill="#7f7f7f" font-weight="bold" text-anchor="middle" textLength="72" lengthAdjust="spacingAndGlyphs" >FACTORY</text>
<rect x="0" y="538.500" width="787" height="1.500" fill="#ececec"/>
<!-- shoe -->
<defs>
<clipPath id="cUpper"><path d="M363.9 236.1 C365.500 233.500 366.800 232.800 368 232 C371 230.500 374.500 230 377.8 229.9 C381.500 229.900 385.500 230.400 388.9 231.3 C392.500 232.400 395.500 233.800 398.6 235.4 L408.3 241 L411 243 C412.500 242.300 414 241.600 415.3 241 C417.500 240.200 420 239.700 422.2 239.6 C426 239.500 430 239.700 433.3 240.3 C436 241 438.500 242.400 440.3 243.8 L445.8 247.2 L450 251.4 L452.2 256.7 L463.3 273.3 L474.4 288.9 L487.8 304.4 L501 315.6 L518.9 331 L526.7 340 L537.8 353.3 L548.9 368.9 C553 375 560 389 562.7 397.8 C564.5 405 565 413 564.5 419 C564 421.500 563 423 562 424.5 C560 427.500 557.500 429 554 430 C550 431.500 546 431.800 541.9 432 L521.5 431.6 L501 429 L480.8 424 L460.4 417 L447 410.5 L440 407 L433.3 402.5 L426.7 395.5 L422.5 389 L421.9 383 L420 372 C419 369 417.500 366.500 415.4 364.600 L413.3 353.3 L406.7 347.5 L395 340 L381.7 331.7 L365 320.8 L351.7 310 L352.5 308.3 L351.4 297.2 L352 280.6 L354.2 265.3 L356.9 252.8 L360.4 243 Z"/></clipPath>
<clipPath id="cSil"><path d="M363.9 236.1 C365.500 233.500 366.800 232.800 368 232 C371 230.500 374.500 230 377.8 229.9 C381.500 229.900 385.500 230.400 388.9 231.3 C392.500 232.400 395.500 233.800 398.6 235.4 L408.3 241 L411 243 C412.500 242.300 414 241.600 415.3 241 C417.500 240.200 420 239.700 422.2 239.6 C426 239.500 430 239.700 433.3 240.3 C436 241 438.500 242.400 440.3 243.8 L445.8 247.2 L450 251.4 L452.2 256.7 L463.3 273.3 L474.4 288.9 L487.8 304.4 L501 315.6 L518.9 331 L526.7 340 L537.8 353.3 L548.9 368.9 C553 375 560 389 562.7 397.8 C564.5 405 565 413 564.7 425.6 C564.500 430 563.800 433 562.3 435.8 C560 439.500 557.500 441 554 441.9 C550 442.900 546 442.900 541.9 442.9 L521.5 441.9 L501 437.8 L486.7 433.9 L475.6 430.6 L464.4 426.7 L453.3 422.2 L442.2 416.7 C439 414.800 436 413 433.3 411 C430 408.500 427.500 406 425.6 403.3 C424 400.500 423 397.500 422.2 394.4 L421.9 383 L420 372 C419 369 417.500 366.500 415.4 364.6 L406 357 L396.7 360 L390 362.5 L385 361.7 L370 353.3 L354.2 342.5 L352.5 338.3 L350.8 310.8 L352.5 308.3 L351.4 297.2 L352 280.6 L354.2 265.3 L356.9 252.8 L360.4 243 Z"/></clipPath>
<clipPath id="cVamp"><path d="M380.800 315 C381.500 313 383 312.300 385 312.500 C387.500 312.800 389.500 313.500 391.700 315 L398.300 321.700 L406.700 331.700 C409.500 334.500 412 337 415 338.300 C418 339.800 420.500 340.600 423.300 340.800 C427 340.600 430 339.700 433.300 338.300 L446.700 333.300 L464.400 323.300 L470 320.500 L486.700 320 L503 316 L530 335 L552 360 L560 390 L520 380 L470 420 L446.700 412 L433.300 405 L424.400 396 L420 383.300 L418 370 L419.200 363.300 L416.700 355 L411.700 348.300 L403.300 341.700 L393.300 335 L385 326.700 L380.800 317.500 Z"/></clipPath>
<clipPath id="cToe"><path d="M540 358 C535 354.500 527 351.500 513.3 350.300 C507 350.200 500 351.300 495 352.600 C492 353.200 490 353.700 487.600 354.400 C483 356 478 358.200 474.600 360 C470 362.500 466 365.300 463.500 367.400 C460 370.500 458 372.500 456 374.800 C453.500 378 451.800 380.500 450.600 383 C449.500 385.500 449 388 448.700 390.600 C448.200 393 447.900 394.500 447.800 396 L446.500 410 L447 410.500 L460.400 417 L480.800 424 L501 429 L521.500 431.600 L541.900 432 C546 431.800 550 431.500 554 430 C557.500 429 560 427.500 562 424.500 C563 423 564 421.500 564.500 419 C565 413 564.500 405 562.700 397.800 C560 389 553 375 548.900 368.900 Z"/></clipPath>
<clipPath id="cOpen"><path d="M366.700 238.200 C368.500 236 370.500 234.800 372.2 234 C375 232.700 378 232.100 380.6 232 C384 232 387.500 232.500 390.3 233.3 C394 234.500 397 236 400 237.5 L408.3 242.4 L410.4 244.4 L405.6 251.4 L398.6 258.3 L390.3 264.6 L383.3 268.8 C382 269.600 381 269.900 379.9 270 C378.500 269.500 377.300 268.500 376.4 267.4 L370.8 258.3 L367.4 248.6 L366.4 241.7 Z"/></clipPath>
<filter id="b2" x="-30%" y="-30%" width="160%" height="160%"><feGaussianBlur stdDeviation="2"/></filter>
<filter id="b3" x="-30%" y="-30%" width="160%" height="160%"><feGaussianBlur stdDeviation="3"/></filter>
<filter id="b4" x="-30%" y="-30%" width="160%" height="160%"><feGaussianBlur stdDeviation="4"/></filter>
<filter id="b7" x="-40%" y="-40%" width="180%" height="180%"><feGaussianBlur stdDeviation="7"/></filter>
<filter id="b05" x="-10%" y="-10%" width="120%" height="120%"><feGaussianBlur stdDeviation="0.500"/></filter>
<linearGradient id="gUpper" x1="350" y1="270" x2="485" y2="300" gradientUnits="userSpaceOnUse">
<stop offset="0" stop-color="#281a14"/><stop offset="0.120" stop-color="#38271f"/><stop offset="0.300" stop-color="#3f2e26"/><stop offset="0.400" stop-color="#524035"/><stop offset="0.500" stop-color="#46342b"/><stop offset="0.680" stop-color="#433128"/><stop offset="0.850" stop-color="#503b2f"/><stop offset="1" stop-color="#584233"/></linearGradient>
<linearGradient id="gVamp" x1="417" y1="378" x2="535" y2="338" gradientUnits="userSpaceOnUse">
<stop offset="0" stop-color="#36211a"/><stop offset="0.150" stop-color="#44291d"/><stop offset="0.260" stop-color="#553222"/><stop offset="0.340" stop-color="#7a4327"/><stop offset="0.420" stop-color="#a0552c"/><stop offset="0.500" stop-color="#b15f2f"/><stop offset="0.800" stop-color="#b46231"/><stop offset="1" stop-color="#96502a"/></linearGradient>
<linearGradient id="gToe" x1="450" y1="385" x2="562" y2="425" gradientUnits="userSpaceOnUse">
<stop offset="0" stop-color="#2c1e18"/><stop offset="0.300" stop-color="#45322a"/><stop offset="0.650" stop-color="#544038"/><stop offset="1" stop-color="#33231c"/></linearGradient>
<linearGradient id="gSole" x1="0" y1="400" x2="0" y2="445" gradientUnits="userSpaceOnUse">
<stop offset="0" stop-color="#4a3324"/><stop offset="1" stop-color="#2c1d15"/></linearGradient>
<linearGradient id="gOpen" x1="370" y1="235" x2="400" y2="268" gradientUnits="userSpaceOnUse">
<stop offset="0" stop-color="#1e0e08"/><stop offset="0.600" stop-color="#28130b"/><stop offset="1" stop-color="#3e2012"/></linearGradient>
</defs>
<path d="M363.9 236.1 C365.500 233.500 366.800 232.800 368 232 C371 230.500 374.500 230 377.8 229.9 C381.500 229.900 385.500 230.400 388.9 231.3 C392.500 232.400 395.500 233.800 398.6 235.4 L408.3 241 L411 243 C412.500 242.300 414 241.600 415.3 241 C417.500 240.200 420 239.700 422.2 239.6 C426 239.500 430 239.700 433.3 240.3 C436 241 438.500 242.400 440.3 243.8 L445.8 247.2 L450 251.4 L452.2 256.7 L463.3 273.3 L474.4 288.9 L487.8 304.4 L501 315.6 L518.9 331 L526.7 340 L537.8 353.3 L548.9 368.9 C553 375 560 389 562.7 397.8 C564.5 405 565 413 564.7 425.6 C564.500 430 563.800 433 562.3 435.8 C560 439.500 557.500 441 554 441.9 C550 442.900 546 442.900 541.9 442.9 L521.5 441.9 L501 437.8 L486.7 433.9 L475.6 430.6 L464.4 426.7 L453.3 422.2 L442.2 416.7 C439 414.800 436 413 433.3 411 C430 408.500 427.500 406 425.6 403.3 C424 400.500 423 397.500 422.2 394.4 L421.9 383 L420 372 C419 369 417.500 366.500 415.4 364.6 L406 357 L396.7 360 L390 362.5 L385 361.7 L370 353.3 L354.2 342.5 L352.5 338.3 L350.8 310.8 L352.5 308.3 L351.4 297.2 L352 280.6 L354.2 265.3 L356.9 252.8 L360.4 243 Z" fill="#2d1d15"/>
<g clip-path="url(#cSil)">
<path d="M350 311 L414 354 L420 372 L398 364 L385 362 L352 340 Z" fill="#3c261a" opacity="0.900"/>
<path d="M351 311 L365 321.500 L381.700 332.500 L395 341 L406.700 348.500 L414 354.500" stroke="#63432f" stroke-width="1.400" fill="none" filter="url(#b05)"/>
<path d="M422.500 389 L426.700 395.500 L433.300 402.500 L440 407 L447 410.500 L460.400 417 L480.800 424 L501 429 L521.500 431.600 L541.900 432 C546 431.800 550 431.500 554 430 C557.500 429 560 427.500 562 424.500 L564.500 419" stroke="#35221a" stroke-width="7" fill="none" stroke-linejoin="round"/>
<path d="M424 393 L426.700 396.700 L433.300 403.900 L442.200 408.300 L453.300 413.300 L464.400 417.200 L475.600 421 L486.700 424.400 L501 430.700 L521.500 433.300 L541.900 433.700 L554 431.700 L562.300 425.600 L564.700 419.500" stroke="#543a2b" stroke-width="1.100" fill="none" stroke-linejoin="round" filter="url(#b05)"/>
</g>
<path d="M391.700 349.200 L402.500 355.800 L396 359.500 L392.500 358.300 Z" fill="#b98262"/>
<path d="M392.500 358.300 L396 359.500 L402.500 355.800 L405.500 357.300 L396.700 361 L390.500 362.300 Z" fill="#7d4a33"/>
<path d="M363.9 236.1 C365.500 233.500 366.800 232.800 368 232 C371 230.500 374.500 230 377.8 229.9 C381.500 229.900 385.500 230.400 388.9 231.3 C392.500 232.400 395.500 233.800 398.6 235.4 L408.3 241 L411 243 C412.500 242.300 414 241.600 415.3 241 C417.500 240.200 420 239.700 422.2 239.6 C426 239.500 430 239.700 433.3 240.3 C436 241 438.500 242.400 440.3 243.8 L445.8 247.2 L450 251.4 L452.2 256.7 L463.3 273.3 L474.4 288.9 L487.8 304.4 L501 315.6 L518.9 331 L526.7 340 L537.8 353.3 L548.9 368.9 C553 375 560 389 562.7 397.8 C564.5 405 565 413 564.5 419 C564 421.500 563 423 562 424.5 C560 427.500 557.500 429 554 430 C550 431.500 546 431.800 541.9 432 L521.5 431.6 L501 429 L480.8 424 L460.4 417 L447 410.5 L440 407 L433.3 402.5 L426.7 395.5 L422.5 389 L421.9 383 L420 372 C419 369 417.500 366.500 415.4 364.600 L413.3 353.3 L406.7 347.5 L395 340 L381.7 331.7 L365 320.8 L351.7 310 L352.5 308.3 L351.4 297.2 L352 280.6 L354.2 265.3 L356.9 252.8 L360.4 243 Z" fill="url(#gUpper)"/>
<g clip-path="url(#cUpper)">
<ellipse cx="352" cy="290" rx="9" ry="55" fill="#20140e" opacity="0.600" filter="url(#b4)"/>
<path d="M336 298 L384 300 L414 322 L430 350 L426 398 L336 340 Z" fill="#1e130e" opacity="0.800" filter="url(#b7)"/>
<path d="M386 268 L404 254 L412 300 L400 318 Z" fill="#6a5244" opacity="0.550" filter="url(#b4)"/>
<ellipse cx="424" cy="246" rx="10" ry="5" fill="#735a4a" opacity="0.600" filter="url(#b2)"/>
<path d="M452 258 L476 290 L503 316 L496 322 L468 300 L448 268 Z" fill="#6a4e3c" opacity="0.600" filter="url(#b2)"/>
<path d="M444 262 L452 285 L462 305 L468 316" stroke="#2e2019" stroke-width="2.500" fill="none" opacity="0.550" filter="url(#b2)"/>
<path d="M379.900 270.300 C384 269.500 391 265 398.600 258.800 L405.600 252 L410.400 245" stroke="#6e5647" stroke-width="1.200" fill="none" filter="url(#b05)"/>
</g>
<path d="M366.700 238.200 C368.500 236 370.500 234.800 372.2 234 C375 232.700 378 232.100 380.6 232 C384 232 387.500 232.500 390.3 233.3 C394 234.500 397 236 400 237.5 L408.3 242.4 L410.4 244.4 L405.6 251.4 L398.6 258.3 L390.3 264.6 L383.3 268.8 C382 269.600 381 269.900 379.9 270 C378.500 269.500 377.300 268.500 376.4 267.4 L370.8 258.3 L367.4 248.6 L366.4 241.7 Z" fill="url(#gOpen)"/>
<g clip-path="url(#cUpper)"><path d="M380.800 315 C381.500 313 383 312.300 385 312.500 C387.500 312.800 389.500 313.500 391.700 315 L398.300 321.700 L406.700 331.700 C409.500 334.500 412 337 415 338.300 C418 339.800 420.500 340.600 423.300 340.800 C427 340.600 430 339.700 433.300 338.300 L446.700 333.300 L464.400 323.300 L470 320.500 L486.700 320 L503 316 L530 335 L552 360 L560 390 L520 380 L470 420 L446.700 412 L433.300 405 L424.400 396 L420 383.300 L418 370 L419.200 363.300 L416.700 355 L411.700 348.300 L403.300 341.700 L393.300 335 L385 326.700 L380.800 317.500 Z" fill="url(#gVamp)"/>
<g clip-path="url(#cVamp)">
<path d="M376 308 L400 316 L424 340 L420 362 L378 332 Z" fill="#603b29" opacity="0.950" filter="url(#b2)"/>
<ellipse cx="469" cy="351" rx="9" ry="7.500" fill="#d59a74" opacity="0.600" filter="url(#b3)"/>
<path d="M418 365 L421 385 L426 396 L434 403.500 L447 411" stroke="#2e1c13" stroke-width="9" fill="none" opacity="0.700" filter="url(#b3)"/>
<path d="M414 345 L440 340 L452 368 L449 412 L425 400 L416 372 Z" fill="#3a2419" opacity="0.550" filter="url(#b4)"/>
<ellipse cx="479" cy="329" rx="11" ry="5" fill="#c98050" opacity="0.600" filter="url(#b2)"/>
<path d="M503 316 L530 335 L552 360 L545 364 L520 340 L498 322 Z" fill="#7e4424" opacity="0.550" filter="url(#b2)"/>
</g></g>
<circle cx="469.300" cy="318.700" r="3.300" fill="#9c5530"/>
<path d="M540 358 C535 354.500 527 351.500 513.3 350.300 C507 350.200 500 351.300 495 352.600 C492 353.200 490 353.700 487.600 354.400 C483 356 478 358.200 474.600 360 C470 362.500 466 365.300 463.500 367.400 C460 370.500 458 372.500 456 374.800 C453.500 378 451.800 380.500 450.600 383 C449.500 385.500 449 388 448.700 390.600 C448.200 393 447.900 394.500 447.800 396 L446.500 410 L447 410.500 L460.400 417 L480.800 424 L501 429 L521.500 431.600 L541.900 432 C546 431.800 550 431.500 554 430 C557.500 429 560 427.500 562 424.500 C563 423 564 421.500 564.500 419 C565 413 564.500 405 562.700 397.800 C560 389 553 375 548.900 368.900 Z" fill="url(#gToe)"/>
<g clip-path="url(#cToe)">
<ellipse cx="508" cy="382" rx="40" ry="12" transform="rotate(30 508 382)" fill="#8a766e" opacity="0.650" filter="url(#b7)"/>
<ellipse cx="478" cy="372" rx="18" ry="5" transform="rotate(-40 478 372)" fill="#7a6860" opacity="0.450" filter="url(#b3)"/>
<ellipse cx="549" cy="414" rx="3.500" ry="6" fill="#8a746c" opacity="0.600" filter="url(#b2)"/>
<ellipse cx="547" cy="398" rx="3" ry="6" transform="rotate(-20 547 398)" fill="#7a645c" opacity="0.450" filter="url(#b2)"/>
<path d="M447 402 L447 410.500 L460.400 417 L480.800 424 L501 429 L521.500 431.600 L541.900 432 L556 429" stroke="#1c110c" stroke-width="6" fill="none" opacity="0.650" filter="url(#b3)"/>
</g>
<path d="M422 264 Q444.9 251.2 450.2 259.6" stroke="#2a1b14" stroke-width="3.800" fill="none" stroke-linecap="round" opacity="0.400" transform="translate(0.600 1.300)" filter="url(#b05)"/>
<path d="M422 264 Q444.9 251.2 450.2 259.6" stroke="#7f6e62" stroke-width="2.800" fill="none" stroke-linecap="round"/>
<path d="M428.2 276.4 Q452.7 262.8 456.3 272" stroke="#2a1b14" stroke-width="3.800" fill="none" stroke-linecap="round" opacity="0.400" transform="translate(0.600 1.300)" filter="url(#b05)"/>
<path d="M428.2 276.4 Q452.7 262.8 456.3 272" stroke="#7f6e62" stroke-width="2.800" fill="none" stroke-linecap="round"/>
<path d="M434.3 287.8 Q457.6 274.6 461.6 282.5" stroke="#2a1b14" stroke-width="3.800" fill="none" stroke-linecap="round" opacity="0.400" transform="translate(0.600 1.300)" filter="url(#b05)"/>
<path d="M434.3 287.8 Q457.6 274.6 461.6 282.5" stroke="#7f6e62" stroke-width="2.800" fill="none" stroke-linecap="round"/>
<path d="M441.4 298.4 Q465.2 286.9 467.8 293" stroke="#2a1b14" stroke-width="3.800" fill="none" stroke-linecap="round" opacity="0.400" transform="translate(0.600 1.300)" filter="url(#b05)"/>
<path d="M441.4 298.4 Q465.2 286.9 467.8 293" stroke="#7f6e62" stroke-width="2.800" fill="none" stroke-linecap="round"/>
<path d="M447.5 309 Q462 297.5 473 303" stroke="#2a1b14" stroke-width="3.800" fill="none" stroke-linecap="round" opacity="0.400" transform="translate(0.600 1.300)" filter="url(#b05)"/>
<path d="M447.5 309 Q462 297.5 473 303" stroke="#7f6e62" stroke-width="2.800" fill="none" stroke-linecap="round"/>
<path d="M565.500 379 L565.500 387.500 L567.500 385.800 L569 389 L570.200 388.400 L568.800 385.300 L571.300 385 Z" fill="#111" stroke="#fff" stroke-width="0.500"/>
</svg>
</body></html>
